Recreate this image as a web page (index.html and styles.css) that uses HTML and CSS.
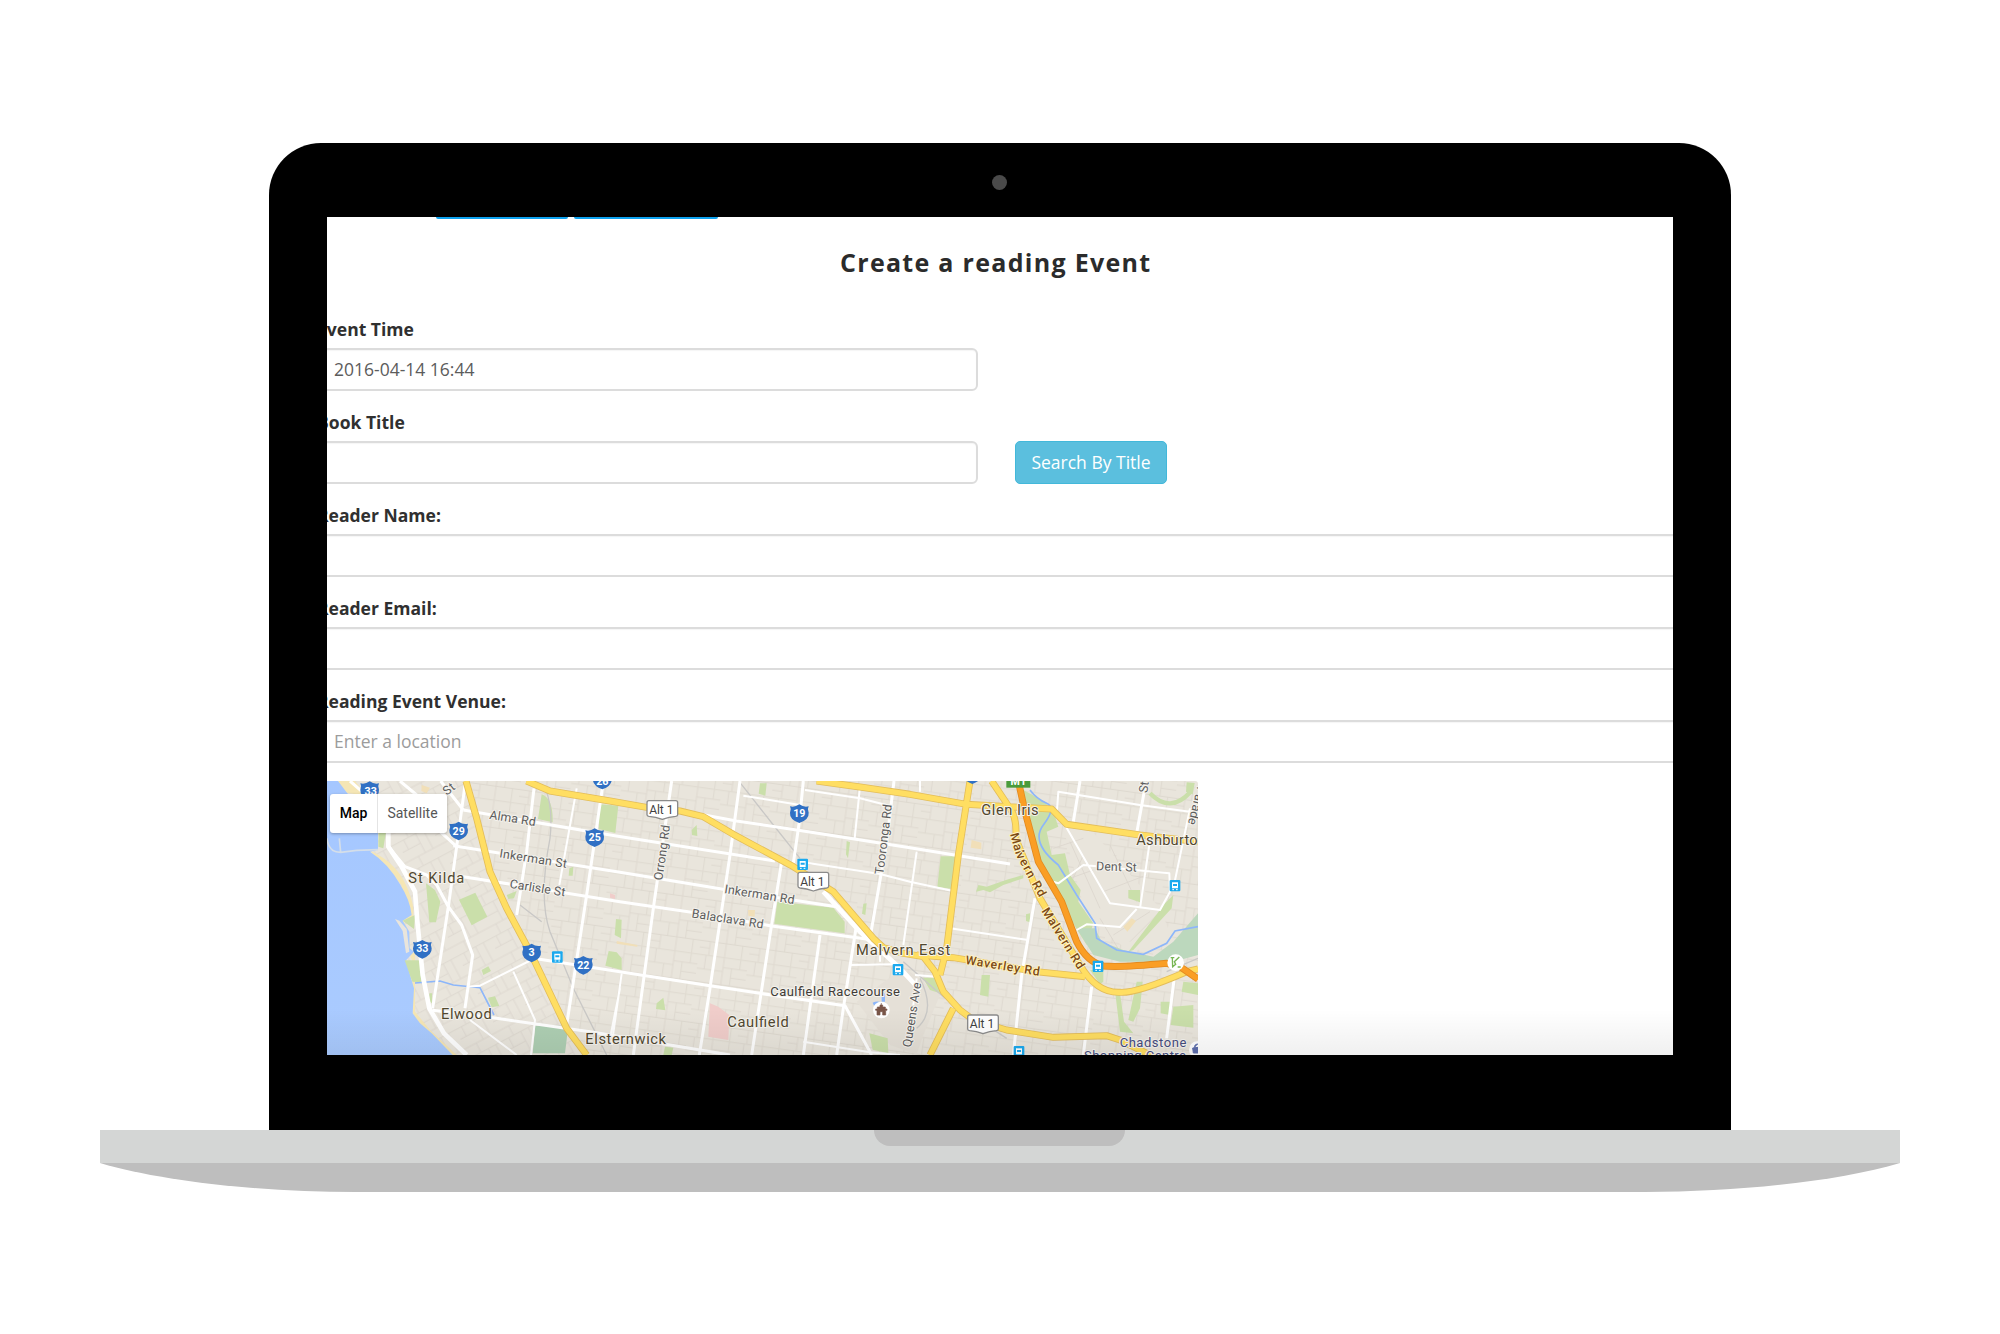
FILE: index.html
```html
<!DOCTYPE html>
<html lang="en">
<head>
<meta charset="utf-8">
<title>Create a reading Event</title>
<link rel="stylesheet" href="styles.css">
</head>
<body>
<div class="laptop">
  <div class="lid">
    <span class="camera"></span>
    <main class="screen">
      <nav class="tabs"><span class="tab tab-first"></span><span class="tab tab-second"></span></nav>
      <h1 class="title">Create a reading Event</h1>
      <form class="form">
        <div class="field"><label class="label">Event Time</label><div class="input input-half">2016-04-14 16:44</div></div>
        <div class="field"><label class="label">Book Title</label><div class="row"><div class="input input-half"></div><button type="button" class="search"><span>Search By Title</span></button></div></div>
        <div class="field"><label class="label">Reader Name:</label><div class="input"></div></div>
        <div class="field"><label class="label">Reader Email:</label><div class="input"></div></div>
        <div class="field"><label class="label">Reading Event Venue:</label><div class="input placeholder">Enter a location</div></div>
      </form>
      <section class="map">
        <svg class="map-canvas" viewBox="21 18 2613 822" width="871" height="274">
          <defs>
            <linearGradient id="sea" x1="0" y1="0" x2="0" y2="1"><stop offset="0" stop-color="#a5c7ff"/><stop offset="1" stop-color="#aacbff"/></linearGradient>
            <pattern id="lanes" width="150" height="124" patternUnits="userSpaceOnUse" patternTransform="rotate(8)">
              <path d="M0 2H150M0 44H78M78 32H150M0 84H150M22 2V44M50 44V84M78 2V124M104 32V84M128 2V32M128 84V124M30 84V124M0 104H30M104 60H150"/>
            </pattern>
            <pattern id="lanes-w" width="110" height="96" patternUnits="userSpaceOnUse" patternTransform="rotate(-28)">
              <path d="M0 2H110M0 34H60M0 66H110M20 2V34M60 2V66M86 2V66M36 66V96"/>
            </pattern>
            <g id="shield"><path d="M-28-21Q-14-17 0-27Q14-17 28-21Q23-12 28-2Q30 18 0 29Q-30 18-28-2Q-23-12-28-21Z"/></g>
            <g id="alt"><path d="M-40-26H40Q46-26 46-20V16Q46 20 40 21Q20 22 0 30Q-20 22-40 21Q-46 20-46 16V-20Q-46-26-40-26Z"/></g>
            <g id="stop"><rect x="-16" y="-17" width="32" height="34" rx="3" fill="#1ba9ee"/><path d="M-9-10H9V8H-9Z" fill="#fff"/><path d="M-6-5H6V1H-6Z" fill="#1ba9ee"/><path d="M-8 12H-3M3 12H8" stroke="#fff" stroke-width="3"/></g>
          </defs>
          <rect x="21" y="18" width="2613" height="822" fill="#e9e5dc"/>
          <rect x="440" y="18" width="2194" height="822" fill="url(#lanes)"/>
          <path d="M21 18H440L510 290L640 540L800 840H21Z" fill="#e9e5dc"/>
          <path d="M21 18H440L510 290L640 540L800 840H21Z" fill="url(#lanes-w)"/>
          <path d="M1720 600L1770 590L1860 660L1810 780L1790 838L1710 810L1610 680Z" fill="#e5e0d7"/>
          <path d="M2230 160L2300 150L2520 400L2560 500L2430 530L2300 430Z" fill="#e9e5dc"/>
          <g class="lane-line"><path d="M2250 200L2340 400M2290 240L2260 310M2350 350L2480 300M2370 210L2450 380M2200 220L2290 190M2250 310L2320 285M2380 480L2490 410M2430 500L2510 420M2340 430L2400 530"/></g>
          <path d="M55 18H105L140 62L60 50ZM150 227Q240 265 270 360Q285 400 278 430L250 437L268 470L270 520L285 535V710L330 765L410 840H385L290 735L278 715V560L225 432L245 330Z" fill="#f5e6b5"/>
          <path d="M21 18H54L82 55L140 120L174 174V224L150 230Q205 265 240 328Q270 375 275 420L248 437L268 470L269 520L282 530L258 556L276 620L282 640L278 715L300 745L335 775L398 840H21Z" fill="url(#sea)"/>
          <path d="M225 432L238 437L260 462L268 530L258 535L248 468Z" fill="#e9e5dc"/>
          <path d="M21 190Q25 232 62 232L58 190M62 232L110 226L174 224" fill="none" stroke="#d4dee9" stroke-width="5"/>
          <g fill="#cadfaa">
            <path d="M176 170H198L190 220L175 215ZM248 437L285 420L282 462ZM254 556L300 556L304 622L277 620ZM318 325L345 345L361 380L348 442H328ZM417 374L466 353L502 425L455 451ZM560 360L590 348L582 370L565 372ZM485 585L505 574L513 588L490 600ZM504 668L525 664L538 693L515 697ZM328 655H336V685L328 678ZM748 280L760 275L758 302H746Z"/>
            <path d="M665 58Q700 70 698 142L654 132ZM840 88L895 92L886 174L836 162ZM888 432L905 434L903 490L884 480ZM866 528L890 532L905 550L905 585L856 572ZM1320 25H1340L1336 62L1316 56ZM1115 165L1130 150L1132 183L1116 180ZM1372 380L1540 398L1574 440V475L1363 446ZM1580 198L1590 202L1584 250L1578 238ZM1630 386L1640 385L1636 420L1626 416ZM1010 685L1030 668L1036 706L1008 702ZM1035 815L1060 818L1055 840H1030ZM1648 775L1703 790L1705 835L1658 824Z"/>
            <path d="M1862 244L1914 244L1896 342L1852 335ZM1968 350L1975 330L2000 335L2060 314L2110 300L2110 310L2050 330L2010 352L1990 345ZM2118 418L2130 415L2130 442L2118 438ZM1808 608H1845L1875 660L1830 645ZM1985 600L2010 600L2005 665L1980 660ZM2110 45L2175 80L2205 125L2215 155L2180 170L2195 240L2235 235L2250 300L2282 345L2275 380L2320 445L2300 510L2250 430L2200 320L2150 240ZM2425 345L2460 345V382L2425 370ZM2560 360L2555 400L2440 525L2425 530L2535 385ZM2590 620L2634 625V660L2585 650ZM2522 680L2552 680L2550 720L2522 715ZM2560 695L2620 690V758L2552 750ZM2384 640L2400 655L2412 740L2440 775L2400 770ZM2450 620H2468L2460 700L2440 740L2425 735ZM2310 585H2350V620L2340 628Z"/>
            <path d="M2600 22L2624 24L2618 58L2598 50Z"/>
          </g>
          <path d="M2490 55Q2550 118 2612 50" fill="none" stroke="#cadfaa" stroke-width="13"/>
          <path d="M2270 460H2325L2345 500L2410 525L2500 545L2560 500L2634 415V540L2560 560L2400 560L2320 540Z" fill="#bcd8bd"/>
          <path d="M646 752H745L735 835H638Z" fill="#aecfb3"/>
          <g fill="#f0cdca"><path d="M1170 685L1195 695L1228 720L1225 795L1165 785ZM870 355L885 360V372L870 368Z"/></g>
          <g fill="#f1dfb8"><path d="M305 30L330 38L320 55L304 48ZM1284 405L1305 405L1304 425L1285 422ZM890 498L952 510V515L890 506ZM1955 195L1984 203V223L1952 218ZM2410 455L2435 430L2448 438L2422 470Z"/></g>
          <g fill="none" stroke="#8cb6fa" stroke-width="5">
            <path d="M285 624L360 618L400 630L480 638L522 720"/>
            <path d="M2130 45Q2150 72 2180 85T2170 150T2215 270L2270 360L2325 445L2330 490L2390 525L2470 538L2540 505L2565 468L2634 455"/>
            <path d="M1660 688Q1675 680 1695 692M1690 680V655" stroke-width="10"/>
          </g>
          <g class="rail">
            <path d="M676 40Q700 100 690 190Q655 370 690 470L760 640L860 840M600 390L665 440M1262 25L1360 150L1440 250M1750 560L1870 665L2060 790M1800 610Q1850 710 1790 760M2540 590L2634 550"/>
          </g>
          <g class="street">
            <path class="wide" d="M205 165V215L245 275L285 350L292 440L308 600L328 700L372 775L440 840"/>
            <path d="M205 215L255 275L320 300L350 330L385 395L425 450L458 540L435 700M410 215L385 395L338 700M435 30L410 215M362 18L430 105M90 18L140 62M240 18L290 60M350 160L410 215"/>
            <path d="M430 105L870 180L1365 258M400 212L900 292L1210 343L1560 397M430 305L900 380L1115 412L1350 452L1660 495M640 550L900 590L1170 632L1320 655L1575 692L1655 840M338 706L530 730L820 772L1140 825L1230 840M1100 110L1250 138L1450 168L1770 218L2070 267"/>
            <path d="M642 40L620 230L590 420M847 40L800 360L740 750M1055 18L1000 400L940 840M1260 18L1230 240L1170 640L1138 840M1450 18L1438 140L1420 265M1385 260L1350 480L1295 840M1500 480L1450 840M1722 18L1700 200L1650 490M1608 460L1570 700L1550 840"/>
            <path class="thin" d="M1440 260L1680 297L1770 320L1895 347M1270 62L1440 90M1455 45L1620 70L1720 95M1620 35L1604 190M770 40L718 330M900 640L870 790M905 595L875 810M440 635L480 632L640 552M580 590L645 735L633 840M450 735L590 840M1450 800L1650 832L1740 840M1590 570L1720 568M1680 500V560"/>
            <path class="wide" d="M1510 350L1620 470L1740 580L1800 645"/>
            <path d="M2145 370L2105 600L2080 840M2315 635L2290 840M2562 615L2540 790M2280 18L2260 140M2478 20L2450 175"/>
            <path class="thin" d="M1890 460L2125 495M2235 150L2370 385L2520 405L2550 350L2548 295L2290 270L2215 325L2180 315M2270 465L2300 448L2400 456L2450 402M2210 120L2215 50L2460 90L2610 110M2490 195L2460 400M2610 100L2562 330M1800 18V50M1790 230L1750 510M1785 600L1850 605M1790 610L1780 690"/>
          </g>
          <g class="road-edge"><use href="#main-roads"/></g>
          <g class="road"><g id="main-roads">
            <path d="M438 18L470 130L510 290L560 400L635 540L740 760L800 840"/>
            <path d="M620 18L690 48L870 78L980 97L1080 108L1150 125L1240 178L1420 275L1500 325L1540 350L1600 420L1660 490L1690 518L1750 535L1810 545L1845 590L1870 650L1920 705L1960 735L2060 765L2200 787L2360 782L2400 795L2500 845"/>
            <path d="M1490 18L1620 36L1770 58L1940 88L2195 102L2240 148L2460 180L2634 200M1950 18L1915 240L1880 520L1860 600M1900 700L1830 840M2015 18L2070 100Q2092 130 2087 190L2160 370L2280 570Q2330 655 2400 652Q2450 655 2600 590L2634 582M1790 540L1900 548L2150 590L2295 605"/>
          </g></g>
          <path class="freeway-edge" d="M2095 18L2115 110L2155 260L2225 380L2270 500Q2300 560 2350 573Q2400 578 2540 565L2580 575L2634 612"/>
          <path class="freeway" d="M2095 18L2115 110L2155 260L2225 380L2270 500Q2300 560 2350 573Q2400 578 2540 565L2580 575L2634 612"/>

          <g class="map-label road-name">
            <text transform="translate(380 62) rotate(-38)" textLength="35">St</text>
            <text transform="translate(507 131) rotate(9)" textLength="140">Alma Rd</text>
            <text transform="translate(537 247) rotate(9)" textLength="204">Inkerman St</text>
            <text transform="translate(568 338) rotate(9)" textLength="168">Carlisle St</text>
            <text transform="translate(1027 317) rotate(-82)" textLength="167">Orrong Rd</text>
            <text transform="translate(1212 354) rotate(9)" textLength="212">Inkerman Rd</text>
            <text transform="translate(1114 427) rotate(9)" textLength="217">Balaclava Rd</text>
            <text transform="translate(1690 299) rotate(-83)" textLength="211">Tooronga Rd</text>
            <text transform="translate(1773 818) rotate(-81)" textLength="196">Queens Ave</text>
            <text transform="translate(2328 286) rotate(2)" textLength="122">Dent St</text>
            <text transform="translate(2482 55) rotate(-82)">St</text>
            <text transform="translate(2604 146) rotate(104)" text-anchor="end">Parade</text>
          </g>
          <g class="map-label main-name">
            <text transform="translate(2070 178) rotate(74)" textLength="64">Mal</text>
            <text transform="translate(2087 240) rotate(61)" textLength="146">vern Rd</text>
            <text transform="translate(2164 408) rotate(58)" textLength="208">Malvern Rd</text>
            <text transform="translate(1935 567) rotate(9)" textLength="225">Waverley Rd</text>
          </g>
          <g class="map-label place">
            <text x="265" y="325" textLength="168">St Kilda</text>
            <text x="363" y="732" textLength="152">Elwood</text>
            <text x="796" y="808" textLength="242">Elsternwick</text>
            <text x="1222" y="755" textLength="184">Caulfield</text>
            <text x="1608" y="540" textLength="283">Malvern East</text>
            <text x="1984" y="119" textLength="172">Glen Iris</text>
            <text x="2449" y="209" textLength="209">Ashburton</text>
          </g>
          <g class="map-label poi">
            <text x="1351" y="664" textLength="389" class="race">Caulfield Racecourse</text>
            <text x="2399" y="816" textLength="200">Chadstone</text>
            <text x="2292" y="854" textLength="306">Shopping Centre</text>
          </g>
          <g class="route">
            <use href="#shield" x="149" y="46"/><text x="152" y="59">33</text>
            <use href="#shield" x="416" y="167"/><text x="416" y="179">29</text>
            <use href="#shield" x="824" y="187"/><text x="824" y="199">25</text>
            <use href="#shield" x="307" y="522"/><text x="307" y="532">33</text>
            <use href="#shield" x="635" y="533"/><text x="635" y="544">3</text>
            <use href="#shield" x="790" y="570"/><text x="790" y="581">22</text>
            <use href="#shield" x="1438" y="115"/><text x="1438" y="126">19</text>
            <use href="#shield" x="847" y="14"/><text x="847" y="29">26</text>
            <use href="#shield" x="1957" y="-2"/>
          </g>
          <rect x="2059" y="0" width="72" height="38" fill="#4a9b3a"/><text class="motor" x="2095" y="31">M1</text>
          <g class="alt">
            <use href="#alt" x="1027" y="103"/><text x="1024" y="117">Alt 1</text>
            <use href="#alt" x="1480" y="318"/><text x="1477" y="333">Alt 1</text>
            <use href="#alt" x="1989" y="746"/><text x="1986" y="760">Alt 1</text>
          </g>
          <use href="#stop" x="712" y="546"/><use href="#stop" x="1448" y="268"/><use href="#stop" x="1734" y="584"/><use href="#stop" x="2334" y="574"/><use href="#stop" x="2565" y="332"/><use href="#stop" x="2097" y="830"/>
          <circle cx="1684" cy="705" r="25" fill="#fff"/><path d="M1671 720V706H1667V702H1672V696H1680V690H1688V696H1696V702H1701V706H1697V720H1688V710H1680V720ZM1684 690V684" fill="#795548" stroke="#795548" stroke-width="2"/>
          <circle cx="2567" cy="563" r="25" fill="#fff"/><path d="M2552 548H2563M2557 548L2558 578M2578 546L2563 560L2567 568L2557 576M2573 576H2582" fill="none" stroke="#77b653" stroke-width="4"/>
          <circle cx="2632" cy="824" r="25" fill="#fff"/><path d="M2618 819L2634 817V834H2620ZM2624 818Q2622 808 2634 807" fill="#5e6eac" stroke="#5e6eac" stroke-width="3"/>
        </svg>
        <div class="map-type"><span class="type-on">Map</span><span class="type-off">Satellite</span></div>
      </section>
      <div class="fade"></div>
    </main>
  </div>
  <div class="deck"><span class="notch"></span></div>
  <svg class="foot" viewBox="0 0 1800 29" width="1800" height="29"><path d="M0 0H1800C1740 18 1640 29 1545 29H255C160 29 60 18 0 0Z" fill="#bebebe"/></svg>
</div>
</body>
</html>
```
FILE: styles.css
```css
* { box-sizing: border-box; }
body { margin: 0; background: #fff; font-family: "Open Sans", "Noto Sans", sans-serif; color: #333; }
.laptop { display: flex; flex-direction: column; align-items: center; height: 1334px; padding-top: 143px; overflow: hidden; }
.lid { position: relative; width: 1462px; height: 987px; padding: 74px 58px 75px; background: #000; border-radius: 52px 52px 0 0; }
.camera { position: absolute; top: 32px; left: 723px; width: 15px; height: 15px; border-radius: 50%; background: #4a4a4a; }
.screen { position: relative; width: 1346px; height: 838px; overflow: hidden; background: #fff; }
.tabs { display: flex; gap: 6px; height: 2px; padding-left: 109px; }
.tab { height: 2px; background: #0ea2ee; border-radius: 0 0 4px 4px; }
.tab-first { width: 132px; }
.tab-second { width: 144px; }
.title { margin: 21px 0 0; padding-left: 513px; font-size: 25px; line-height: 44px; font-weight: 700; letter-spacing: 1.3px; white-space: nowrap; color: #2b2b2b; }
.form { width: 1372px; margin: 31px 0 0 -12px; }
.field { height: 93px; }
.label { display: block; height: 33px; padding-left: 2px; line-height: 29px; font-size: 17.55px; font-weight: 700; color: #303030; white-space: nowrap; }
.input { width: 100%; height: 43px; padding: 0 17px; border: 2px solid #dcdcdc; border-radius: 6px; font-size: 17.5px; line-height: 39px; color: #5c5c5c; box-shadow: inset 0 1px 1px rgba(0, 0, 0, .04); white-space: nowrap; }
.input-half { width: 663px; }
.placeholder { color: #9c9c9c; }
.row { display: flex; gap: 37px; }
.search { display: flex; align-items: center; justify-content: center; width: 152px; height: 43px; padding: 0 0 2px; border: 1px solid #42b8da; border-radius: 5px; background: #5bbfde; color: #fff; font: 17.5px "Open Sans", sans-serif; white-space: nowrap; }
.map { position: relative; width: 871px; height: 274px; margin-top: 1px; }
.map-canvas { display: block; border-radius: 0 3px 0 0; }
.map-type { position: absolute; left: 3px; top: 13px; display: flex; width: 117px; height: 39px; background: #fff; border-radius: 3px; box-shadow: 0 1px 3px rgba(0, 0, 0, .3); font: 14px/38px Roboto, sans-serif; }
.type-on { width: 48px; text-align: center; font-weight: 500; color: #000; border-right: 1px solid #e4e4e4; }
.type-off { flex: 1; text-align: center; color: #565656; }
.fade { position: absolute; left: 0; right: 0; bottom: 0; height: 46px; background: linear-gradient(rgba(0, 0, 0, 0), rgba(0, 0, 0, .06)); }
.deck { display: flex; justify-content: center; width: 1800px; height: 33px; padding-right: 1px; background: #d4d6d5; }
.notch { width: 251px; height: 16px; background: #bebebe; border-radius: 0 0 16px 16px; }
.foot { display: block; }

.map text { font-family: Roboto, sans-serif; }
#lanes path, #lanes-w path, .lane-line { fill: none; stroke: #dcd7ce; stroke-width: 2.6; }
.rail { fill: none; stroke: #c9c8c6; stroke-width: 4; }
.street { fill: none; stroke: #fff; stroke-width: 9; stroke-linejoin: round; }
.street .wide { stroke-width: 14; }
.street .thin { stroke-width: 6; }
.road-edge, .road { fill: none; stroke-linejoin: round; }
.road-edge { stroke: #e3bd5a; stroke-width: 21; }
.road { stroke: #ffde62; stroke-width: 16; }
.freeway-edge, .freeway { fill: none; stroke-linejoin: round; }
.freeway-edge { stroke: #e28a21; stroke-width: 21; }
.freeway { stroke: #fa9e25; stroke-width: 16; }
.map-label text { paint-order: stroke; stroke: #f5f3ee; stroke-width: 6; stroke-linejoin: round; }
.road-name { font-size: 37px; fill: #5c5c5c; }
.map .main-name { font-size: 37px; font-weight: 500; fill: #7d4b14; }
.map .main-name text { stroke: #fff3c4; }
.place { font-size: 44px; fill: #51472f; }
.poi { font-size: 39px; fill: #454c7e; }
.poi .race { fill: #403b37; }
.route use { fill: #3070c4; }
.route text { fill: #fff; font-size: 32px; font-weight: 700; text-anchor: middle; }
.motor { fill: #fff; font-size: 32px; font-weight: 700; text-anchor: middle; }
.alt use { fill: #fff; stroke: #8b8b8b; stroke-width: 4; }
.alt text { font-size: 36px; fill: #404040; text-anchor: middle; }
```
